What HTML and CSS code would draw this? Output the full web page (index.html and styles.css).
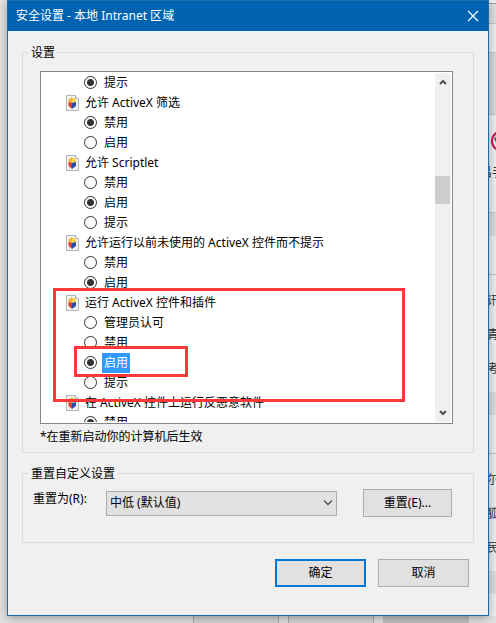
FILE: index.html
```html
<!DOCTYPE html>

<html lang="zh-CN">
    <head>
        <meta charset="utf-8">
        <title>安全设置 - 本地 Intranet 区域</title>
        <link rel="stylesheet" href="styles.css">
    </head>

    <body>
        <!-- page icon used by every group heading -->
        <svg class="sprite" width="0" height="0">
            <symbol id="doc" viewBox="0 0 13 16">
                <path d="M.5.5h9l3 3v12H.5z" fill="#f4f4f4" stroke="#b4b4b4"/>
                <path d="M9.500.5v3h3" fill="#fff" stroke="#b4b4b4"/>
                <path d="M6 2l4 2.500V9L6 8z" fill="#fbd04a"/>
                <path d="M6 2L2.500 4.500V8L6 9z" fill="#f5b63c"/>
                <path d="M2.500 7L6 8v6l-3.500-3z" fill="#d8402c"/>
                <path d="M6 8l4-1v4l-4 3z" fill="#2b4cb4"/>
            </symbol>
        </svg>

        <div class="desktop">
            <main class="dialog">
                <header class="titlebar">
                    <h1>安全设置 - 本地 Intranet 区域</h1>
                    <button type="button" class="close" aria-label="关闭">
                        <svg width="12" height="12" viewBox="0 0 12 12"><path d="M1 1l10 10M11 1L1 11" stroke="#fff" stroke-width="1.300"/></svg>
                    </button>
                </header>

                <form>
                    <fieldset class="settings">
                        <legend>设置</legend>
                        <div class="listbox">
                            <div class="list">
                                <label class="option"><input type="radio" name="prev" checked><span>提示</span></label>

                                <h2><svg><use href="#doc"/></svg>允许 ActiveX 筛选</h2>
                                <label class="option"><input type="radio" name="filter" checked><span>禁用</span></label>
                                <label class="option"><input type="radio" name="filter"><span>启用</span></label>

                                <h2><svg><use href="#doc"/></svg>允许 Scriptlet</h2>
                                <label class="option"><input type="radio" name="scriptlet"><span>禁用</span></label>
                                <label class="option"><input type="radio" name="scriptlet" checked><span>启用</span></label>
                                <label class="option"><input type="radio" name="scriptlet"><span>提示</span></label>

                                <h2><svg><use href="#doc"/></svg>允许运行以前未使用的 ActiveX 控件而不提示</h2>
                                <label class="option"><input type="radio" name="unused"><span>禁用</span></label>
                                <label class="option"><input type="radio" name="unused" checked><span>启用</span></label>

                                <h2><svg><use href="#doc"/></svg>运行 ActiveX 控件和插件</h2>
                                <label class="option"><input type="radio" name="run"><span>管理员认可</span></label>
                                <label class="option"><input type="radio" name="run"><span>禁用</span></label>
                                <label class="option"><input type="radio" name="run" checked><span class="selected">启用</span></label>
                                <label class="option"><input type="radio" name="run"><span>提示</span></label>

                                <h2><svg><use href="#doc"/></svg>在 ActiveX 控件上运行反恶意软件</h2>
                                <label class="option"><input type="radio" name="malware" checked><span>禁用</span></label>
                            </div>
                            <div class="scrollbar">
                                <svg width="8" height="6" viewBox="0 0 8 6"><path d="M1 5l3-3 3 3" fill="none" stroke="#505050" stroke-width="2"/></svg>
                                <div class="track"><div class="thumb"></div></div>
                                <svg width="8" height="6" viewBox="0 0 8 6"><path d="M1 1l3 3 3-3" fill="none" stroke="#505050" stroke-width="2"/></svg>
                            </div>
                            <div class="mark mark-group"></div>
                            <div class="mark mark-option"></div>
                        </div>
                        <p class="note">*在重新启动你的计算机后生效</p>
                    </fieldset>

                    <fieldset class="reset">
                        <legend>重置自定义设置</legend>
                        <div class="reset-row">
                            <label for="level">重置为(R):</label>
                            <div class="select">
                                <select id="level" name="level">
                                    <option>中低 (默认值)</option>
                                </select>
                                <svg width="10" height="6" viewBox="0 0 10 6"><path d="M1 .5l4 4 4-4" fill="none" stroke="#505050" stroke-width="1.300"/></svg>
                            </div>
                            <button type="button" class="btn">重置(E)...</button>
                        </div>
                    </fieldset>

                    <div class="actions">
                        <button type="submit" class="btn btn-default">确定</button>
                        <button type="button" class="btn">取消</button>
                    </div>
                </form>
            </main>

            <!-- what shows of the page behind the dialog -->
            <aside class="behind">
                <div class="band top"></div>
                <div class="band bar"></div>
                <div class="band tabs"></div>
                <div class="band banner"></div>
                <div class="band logo">
                    <svg width="22" height="22" viewBox="0 0 22 22"><circle cx="11" cy="11" r="10" fill="none" stroke="#c8184a" stroke-width="2"/><path d="M3 9h8M5 7v5" stroke="#c8184a" stroke-width="1.500"/></svg>
                    <p>昌手</p>
                </div>
                <div class="band shade"></div>
                <div class="band gap"></div>
                <div class="band links"><p>讯</p><p>青</p><p>考</p></div>
                <div class="band shade"></div>
                <div class="band gap"></div>
                <div class="band links"><p>尔</p><p>狐</p><p>民</p></div>
                <div class="band shade"></div>
            </aside>

            <footer class="cards">
                <div></div>
                <div></div>
                <div class="dark"></div>
            </footer>
        </div>
    </body>
</html>
```

FILE: styles.css
```css
* {box-sizing: border-box}

body
{
    margin: 0;
    font-family: "Noto Sans", "Noto Sans CJK SC", sans-serif;
    font-size: 12px;
    line-height: 16px;
    color: #000;
    background: #e4e4e4;
}

h1, h2, p
{
    margin: 0;
    font-size: 12px;
    font-weight: normal;
}

button, select
{
    font: inherit;
    color: inherit;
}

.sprite {
  display: block;
}

.desktop {
  display: grid;
  grid-template-columns: 7px 1fr 7px;
  grid-template-rows: auto 7px;
  overflow: hidden;
}

/* Dialog window */
.dialog {
  grid-column: 2;
  grid-row: 1;
  z-index: 1;
  border: 1px solid #1a6cae;
  background: #f0f0f0;
  box-shadow: 0 2px 10px rgba(0, 0, 0, 0.35);
}

.titlebar {
  display: flex;
  align-items: center;
  justify-content: space-between;
  height: 30px;
  padding: 0 9px 0 8px;
  background: #0063b1;
  color: #fff;
}

.close {
  display: flex;
  padding: 0;
  border: none;
  background: none;
}

form {
  padding: 13px 14px 28px;
}

fieldset {
  min-width: 0;
  margin: 0;
  border: 1px solid #dcdcdc;
}

legend {
  padding: 1px 2px 0;
  line-height: 15px;
}

.settings {
  padding: 11px 20px 7px 17px;
}

.settings legend {
  margin-left: -11px;
}

/* Scrolling list of options */
.listbox {
  position: relative;
  display: flex;
  height: 353px;
  padding-right: 1px;
  border: 1px solid #828790;
  background: #fff;
  overflow: hidden;
}

.list {
  flex: 1;
  height: 350px;
  padding: 1px 0 0 25px;
  overflow: hidden;
}

.list h2 {
  display: flex;
  align-items: center;
  gap: 6px;
  height: 20px;
}

.list h2 svg {
  width: 13px;
  height: 16px;
}

.option {
  display: flex;
  align-items: center;
  gap: 5px;
  height: 20px;
  padding-left: 18px;
}

.option span {
  padding: 2px;
}

.option .selected {
  background: #3399ff;
  color: #fff;
}

input[type=radio] {
  appearance: none;
  width: 13px;
  height: 13px;
  margin: 0 0 1px;
  border: 1px solid #333;
  border-radius: 50%;
  background: #fff;
}

input[type=radio]:checked {
  background: radial-gradient(circle, #333 0 3px, #fff 4px);
}

.scrollbar {
  display: flex;
  flex-direction: column;
  align-items: center;
  width: 16px;
  margin: 1px 0;
  padding: 6px 0;
  background: #f0f0f0;
}

.track {
  flex: 1;
  align-self: stretch;
  padding: 91px 1px 0 0;
}

.thumb {
  height: 28px;
  background: #cdcdcd;
}

/* Red boxes drawn over the list */
.mark {
  position: absolute;
  border: 3px solid #fc3838;
  pointer-events: none;
}

.mark-group {
  left: 12px;
  top: 216px;
  width: 352px;
  height: 114px;
}

.mark-option {
  left: 33px;
  top: 274px;
  width: 114px;
  height: 31px;
}

.note {
  margin-top: 5px;
}

/* Reset row */
.reset {
  margin-top: 12px;
  padding: 8px 21px 25px 10px;
}

.reset legend {
  margin-left: -4px;
}

.reset-row {
  display: flex;
  align-items: center;
}

.reset-row label {
  align-self: flex-start;
  width: 73px;
  padding-top: 2px;
}

.select {
  display: grid;
  flex: 1;
  align-items: center;
  margin-right: 26px;
}

.select select, .select svg {
  grid-area: 1 / 1;
}

.select svg {
  justify-self: end;
  margin-right: 4px;
  pointer-events: none;
}

select {
  appearance: none;
  width: 100%;
  height: 25px;
  padding: 0 3px;
  border: 1px solid #adadad;
  border-radius: 0;
  background: #e1e1e1;
}

.btn {
  width: 91px;
  height: 28px;
  padding: 0;
  border: 1px solid #adadad;
  background: #e1e1e1;
}

.reset-row .btn {
  width: 89px;
}

.btn-default {
  border: 2px solid #0078d7;
}

.actions {
  display: flex;
  justify-content: flex-end;
  gap: 12px;
  padding: 16px 5px 0 0;
}

/* Page behind */
.behind {
  grid-column: 3;
  grid-row: 1;
  display: flex;
  flex-direction: column;
  overflow: hidden;
  background: #f2f2f2;
  color: #333;
}

.band {
  flex: none;
  border-bottom: 1px solid #c8c8c8;
}

.top {
  height: 4px;
  border-color: #999;
}

.bar {
  height: 20px;
  background: #e2e2e2;
}

.tabs {
  height: 29px;
}

.banner {
  height: 62px;
  background: #dcdcdc;
}

.logo {
  height: 98px;
  padding: 15px 0 0 2px;
}

.logo svg {
  display: block;
}

.logo p {
  width: 30px;
  margin: 13px 0 0 -11px;
}

.shade {
  height: 23px;
  border: none;
  background: #e0e0e0;
}

.gap {
  height: 39px;
}

.links {
  height: 117px;
  padding-top: 18px;
  border: none;
}

.links p {
  margin: 0 0 18px -2px;
}

.cards {
  grid-column: 1 / 4;
  grid-row: 2;
  display: flex;
  gap: 9px;
  padding-left: 193px;
}

.cards div {
  width: 86px;
  border: 1px solid #aaa;
  border-width: 0 1px;
  background: #d8d8d8;
}

.cards .dark {
  border: none;
  background: #c4c4c4;
}
```
